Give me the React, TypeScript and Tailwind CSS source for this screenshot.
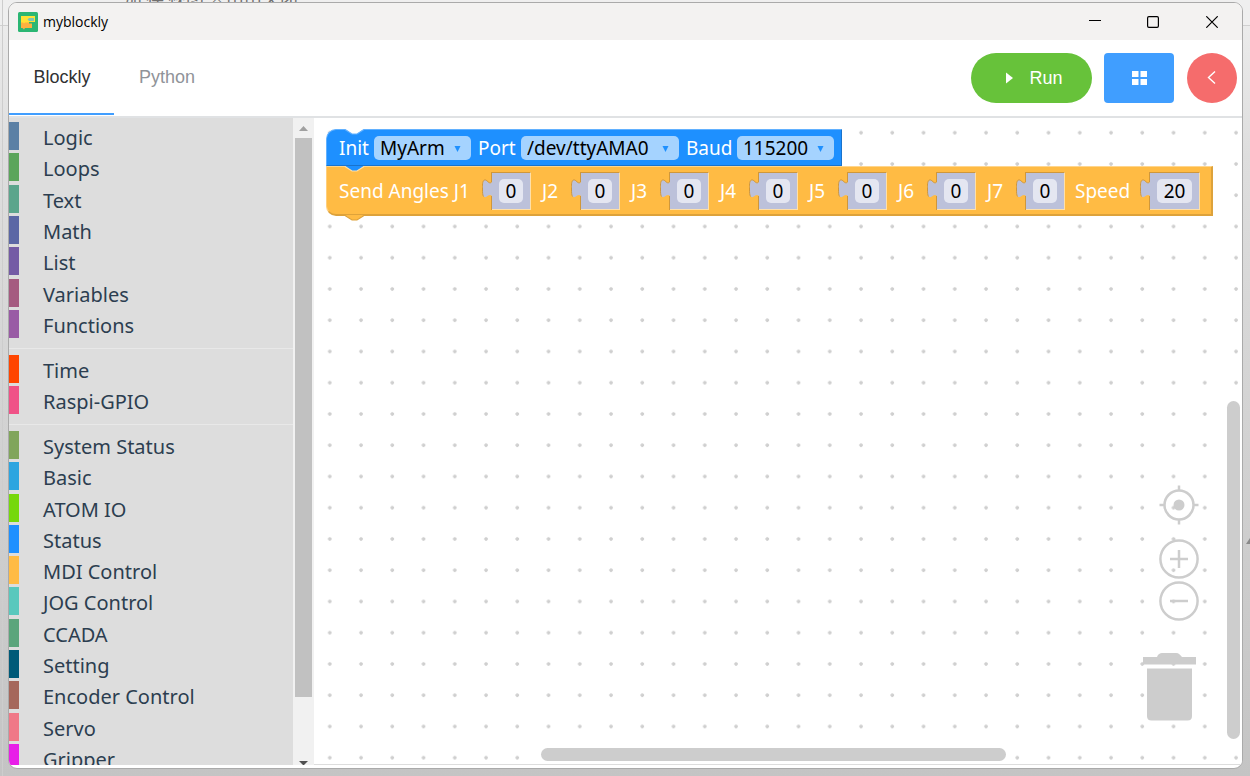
import React from "react";

type Category = { name: string; color: string };

const groups: { height: string; items: Category[] }[] = [
  {
    height: "h-[216px]",
    items: [
      { name: "Logic", color: "bg-[#5b80a5]" },
      { name: "Loops", color: "bg-[#5ba55b]" },
      { name: "Text", color: "bg-[#5ba58c]" },
      { name: "Math", color: "bg-[#5b67a5]" },
      { name: "List", color: "bg-[#745ba5]" },
      { name: "Variables", color: "bg-[#a55b80]" },
      { name: "Functions", color: "bg-[#995ba5]" },
    ],
  },
  {
    height: "h-[59px]",
    items: [
      { name: "Time", color: "bg-[#ff4500]" },
      { name: "Raspi-GPIO", color: "bg-[#f05287]" },
    ],
  },
  {
    height: "h-[341px]",
    items: [
      { name: "System Status", color: "bg-[#80a55b]" },
      { name: "Basic", color: "bg-[#2da5e0]" },
      { name: "ATOM IO", color: "bg-[#76d80b]" },
      { name: "Status", color: "bg-[#1e90ff]" },
      { name: "MDI Control", color: "bg-[#ffbb44]" },
      { name: "JOG Control", color: "bg-[#59c8bd]" },
      { name: "CCADA", color: "bg-[#5ba57c]" },
      { name: "Setting", color: "bg-[#005a78]" },
      { name: "Encoder Control", color: "bg-[#a5675b]" },
      { name: "Servo", color: "bg-[#f07887]" },
      { name: "Gripper", color: "bg-[#e81ee8]" },
    ],
  },
];

function TitleBar() {
  return (
    <div className="flex h-[37px] shrink-0 items-center bg-[#f3f2f1] pl-[9px]">
      <svg width="20" height="20" viewBox="0 0 20 20" aria-hidden="true">
        <rect width="20" height="20" rx="1.5" fill="#2bb673" />
        <path d="M3 4H17V10H11V12H3Z" fill="#ffe135" />
        <path d="M3 10.500H5L6 11.500L7 10.500H11V11.500H14V16H7L6 17.500L4.500 16H3Z" fill="#fbb040" />
        <path d="M9.500 7.500L11 6H16V9H11Z" fill="#7cc5b5" />
      </svg>
      <h1 className="ml-[5px] flex-1 font-['Open_Sans','Noto_Sans',sans-serif] text-[14px] leading-5 text-black">
        myblockly
      </h1>
      <div className="flex h-full">
        <button aria-label="Minimize" className="grid w-[58px] place-items-center">
          <svg width="12" height="12" viewBox="0 0 12 12">
            <path d="M0 4.500H12" stroke="#000" />
          </svg>
        </button>
        <button aria-label="Maximize" className="grid w-[58px] place-items-center">
          <svg width="12" height="12" viewBox="0 0 12 12">
            <rect x=".6" y=".6" width="10.8" height="10.8" rx="1.3" fill="none" stroke="#000" strokeWidth="1.2" />
          </svg>
        </button>
        <button aria-label="Close" className="grid w-[60px] place-items-center">
          <svg width="12" height="12" viewBox="0 0 12 12">
            <path d="M.3.3L11.7 11.7M11.7.3L.3 11.7" stroke="#000" strokeWidth="1.2" />
          </svg>
        </button>
      </div>
    </div>
  );
}

function Header() {
  return (
    <header className="flex h-[78px] shrink-0 items-stretch border-b-2 border-[#e0e2e4] bg-white font-['Liberation_Sans',Arial,sans-serif] text-[18px]">
      <nav className="flex flex-1 pb-px">
        <button className="w-[105px] border-b-2 border-[#409eff] pl-px pt-[2px] text-[#303133]">Blockly</button>
        <button className="w-[105px] border-b-2 border-transparent pl-px pt-[2px] text-[#909399]">Python</button>
      </nav>
      <div className="flex items-center pr-[5px] text-white">
        <button className="mr-3 flex h-[50px] w-[121px] items-center justify-center gap-4 rounded-full bg-[#67c23a] pl-[6px]">
          <svg width="7" height="12" viewBox="0 0 7 12" aria-hidden="true">
            <path d="M0 .5L7 6L0 11.500Z" fill="#fff" />
          </svg>
          Run
        </button>
        <button aria-label="Blocks" className="mr-[13px] grid h-[50px] w-[70px] place-items-center rounded bg-[#409eff]">
          <svg width="15" height="15" viewBox="0 0 15 15">
            <path d="M0 0H6.5V6H0ZM8.5 0H15V6H8.5ZM0 8H6.5V14H0ZM8.5 8H15V14H8.5Z" fill="#fff" />
          </svg>
        </button>
        <button aria-label="Back" className="grid h-[50px] w-[50px] place-items-center rounded-full bg-[#f56c6c]">
          <svg width="10" height="14" viewBox="0 0 10 14">
            <path d="M8 .5L1.500 6.500L8 12.500" fill="none" stroke="#fff" strokeWidth="1.4" />
          </svg>
        </button>
      </div>
    </header>
  );
}

function Toolbox() {
  return (
    <aside className="flex w-[305px] shrink-0 overflow-hidden bg-[#ddd]">
      <div className="flex-1 pt-1 font-['Noto_Sans','Open_Sans',sans-serif] text-[20px] text-[#2c3e50]">
        {groups.map((group, i) => (
          <ul
            key={i}
            className={`flex flex-col justify-between ${group.height} ${i > 0 ? "mt-[17px]" : ""} relative`}
          >
            {i > 0 && <li aria-hidden="true" className="absolute inset-x-0 -top-[7px] h-px bg-[#e8e8e8]" />}
            {group.items.map((item) => (
              <li key={item.name} className="flex h-7 items-start">
                <span className={`h-7 w-[10px] ${item.color}`} />
                <button className="ml-6 leading-8">{item.name}</button>
              </li>
            ))}
          </ul>
        ))}
      </div>
      <div className="flex w-[21px] flex-col items-center bg-[#f1f1f1]">
        <svg className="shrink-0" width="21" height="20" viewBox="0 0 21 20" aria-hidden="true">
          <path d="M6 13L10.5 8L15 13Z" fill="#a0a0a0" />
        </svg>
        <div className="h-[559px] w-[17px] shrink-0 bg-[#c1c1c1]" />
        <svg className="mt-auto shrink-0" width="21" height="5" viewBox="0 0 21 5" aria-hidden="true">
          <path d="M6 1H15L11 5H10Z" fill="#505050" />
        </svg>
      </div>
    </aside>
  );
}

function Notch({ fill, edge }: { fill: string; edge: string }) {
  return (
    <svg width="21" height="7" viewBox="0 0 21 7" aria-hidden="true">
      <path d="M1 0L8 5H13L20 0Z" fill={fill} />
      <path d="M1 .5L8 5H13L20 .5" fill="none" stroke={edge} strokeWidth="1.2" />
    </svg>
  );
}

function SelectField({ label, value, width }: { label: string; value: string; width: string }) {
  return (
    <span className={`relative flex h-6 ${width}`}>
      <select
        aria-label={label}
        defaultValue={value}
        className="w-full appearance-none rounded-[5px] bg-[#a5d3ff] pl-[6px] leading-6 text-black outline-none"
      >
        <option>{value}</option>
      </select>
      <svg className="pointer-events-none absolute right-[10px] top-[10px]" width="7" height="6" viewBox="0 0 7 6" aria-hidden="true">
        <path d="M.5 0H6.500L3.500 6Z" fill="#1e90ff" />
      </svg>
    </span>
  );
}

function NumberSocket({ id, value, wide }: { id: string; value: string; wide?: boolean }) {
  return (
    <span className="flex h-[38px]">
      <svg width="10" height="38" viewBox="0 0 10 38" aria-hidden="true">
        <path d="M10 10C7 13 5 7 2.500 8C0 9 .5 14 .5 17C.5 20 0 24 2.500 25C5 26 7 21 10 24Z" fill="#bcc1da" />
        <path d="M9.500 0V10C7 13 5 7 2.500 8C0 9 .5 14 .5 17C.5 20 .5 23 1.500 24.500M9.500 24V38" fill="none" stroke="#cf973b" />
      </svg>
      <span className={`grid place-items-center border-b border-r border-t border-b-[#ffe0a8] border-r-[#ffe0a8] border-t-[#cf973b] bg-[#bcc1da] ${wide ? "w-[50px]" : "w-[39px]"}`}>
        <input
          id={id}
          defaultValue={value}
          className={`h-6 rounded-[5px] bg-[#e4e6f1] text-center text-black outline-none ${wide ? "w-[35px]" : "w-6"}`}
        />
      </span>
    </span>
  );
}

const joints = ["J2", "J3", "J4", "J5", "J6", "J7"];

function Blocks() {
  return (
    <div className="absolute left-3 top-[11px] w-max font-['Noto_Sans','Open_Sans',sans-serif] text-[19px] leading-6 text-white">
      <div className="relative flex h-[37px] w-max items-center rounded-tl-[10px] border-b border-l border-r border-t border-b-[#1973cc] border-l-[#62b1ff] border-r-[#1973cc] border-t-[#62b1ff] bg-[#1e90ff] pl-3 pr-[7px]">
        <span className="absolute -top-px left-[17px]">
          <Notch fill="#fff" edge="#62b1ff" />
        </span>
        <span className="w-[35px]">Init</span>
        <SelectField label="Robot" value="MyArm" width="w-[97px]" />
        <span className="w-[50px] pl-[7px]">Port</span>
        <SelectField label="Port" value="/dev/ttyAMA0" width="w-[158px]" />
        <span className="w-[58px] pl-[7px]">Baud</span>
        <SelectField label="Baud" value="115200" width="w-[97px]" />
      </div>
      <div className="relative flex h-[50px] w-max items-center rounded-bl-[10px] border-b-2 border-l border-r-2 border-t border-b-[#dda23b] border-l-[#ffcf7c] border-r-[#dda23b] border-t-[#ffd58c] bg-[#ffbb44] pl-3 pr-[11px]">
        <span className="absolute -top-px left-[17px]">
          <Notch fill="#1e90ff" edge="#ffe0a8" />
        </span>
        <label htmlFor="J1" className="w-[143px]">Send Angles J1</label>
        <NumberSocket id="J1" value="0" />
        {joints.map((joint) => (
          <React.Fragment key={joint}>
            <label htmlFor={joint} className="w-10 pl-[11px]">{joint}</label>
            <NumberSocket id={joint} value="0" />
          </React.Fragment>
        ))}
        <label htmlFor="speed" className="w-[75px] pl-[10px]">Speed</label>
        <NumberSocket id="speed" value="20" wide />
        <span className="absolute -bottom-[8px] left-[17px]">
          <Notch fill="#ffbb44" edge="#dda23b" />
        </span>
      </div>
    </div>
  );
}

function WorkspaceControls() {
  return (
    <div className="absolute bottom-[43px] right-[43px] flex flex-col items-end text-[#cdcdcd]">
      <button aria-label="Center workspace">
        <svg width="40" height="40" viewBox="0 0 40 40" fill="none" stroke="currentColor" strokeWidth="2.500">
          <circle cx="20" cy="20" r="14.500" />
          <circle cx="20" cy="20" r="5.500" fill="currentColor" stroke="none" />
          <path d="M20 .5V6M20 34V39.500M.5 20H6M34 20H39.500" />
        </svg>
      </button>
      <button aria-label="Zoom in" className="mt-[14px]">
        <svg width="40" height="40" viewBox="0 0 40 40" fill="none" stroke="currentColor" strokeWidth="2.500">
          <circle cx="20" cy="20" r="18.600" />
          <path d="M11 20H29M20 11V29" />
        </svg>
      </button>
      <button aria-label="Zoom out" className="mt-[2px]">
        <svg width="40" height="40" viewBox="0 0 40 40" fill="none" stroke="currentColor" strokeWidth="2.500">
          <circle cx="20" cy="20" r="18.600" />
          <path d="M11 20H29" />
        </svg>
      </button>
      <button aria-label="Trash" className="mr-[3px] mt-8">
        <svg width="54" height="68" viewBox="0 0 54 68" fill="currentColor">
          <path d="M1 4H15C16 1 18 0 20 0H34C37 0 38 2 40 4H54V11.500H1Z" />
          <path d="M5 15.500H50V63Q50 67.500 45.500 67.500H9.500Q5 67.500 5 63Z" />
        </svg>
      </button>
    </div>
  );
}

function Workspace() {
  return (
    <main className="relative min-w-0 flex-1 overflow-hidden border-b border-[#ddd] bg-white">
      <svg className="absolute inset-0 h-full w-full" aria-hidden="true">
        <defs>
          <pattern id="dots" width="31.250" height="31.250" patternUnits="userSpaceOnUse">
            <path d="M14 14.700H17.600M15.800 12.900V16.500" stroke="#cfcfcf" strokeWidth="2" />
          </pattern>
        </defs>
        <rect width="100%" height="100%" fill="url(#dots)" />
      </svg>
      <Blocks />
      <WorkspaceControls />
      <div className="absolute bottom-[25px] right-[2px] h-[338px] w-[13px] rounded-full bg-[#cdcdcd]" />
      <div className="absolute bottom-[3px] left-[227px] h-[13px] w-[465px] rounded-full bg-[#cdcdcd]" />
    </main>
  );
}

function Backdrop() {
  return (
    <div className="absolute inset-0 overflow-hidden bg-gradient-to-b from-[#eeeeee] via-[#dedede] via-20% to-[#c4c4c4]">
      <div className="h-[26px] border-b border-[#d0d0d0] bg-[#efefef]" />
      <div className="absolute inset-y-0 left-[2px] w-px bg-[#cdcdcd]" />
      <p className="absolute -top-[11px] left-[124px] whitespace-pre font-['Noto_Sans_CJK_SC',sans-serif] text-[18px] leading-4 text-[#707070]">
        加 存 视图 ※由由关闭
      </p>
      <svg className="absolute right-0 top-[538px]" width="4" height="6" viewBox="0 0 4 6" aria-hidden="true">
        <path d="M4 0V6H0Z" fill="#8a8a8a" />
      </svg>
    </div>
  );
}

export default function App() {
  return (
    <div className="relative h-screen overflow-hidden pb-[7px] pl-2 pr-[7px] pt-[2px]">
      <Backdrop />
      <div className="relative flex h-full flex-col overflow-hidden rounded-[9px] border border-[#aaa] bg-white pb-[3px]">
        <TitleBar />
        <Header />
        <div className="flex min-h-0 flex-1">
          <Toolbox />
          <Workspace />
        </div>
      </div>
    </div>
  );
}
